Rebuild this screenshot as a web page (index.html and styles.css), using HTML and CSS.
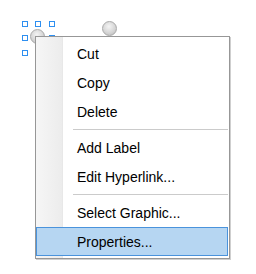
FILE: index.html
```html
<!DOCTYPE html>
<html>
<head>
<meta charset="utf-8">
<link rel="stylesheet" href="styles.css">
</head>
<body>
<div class="canvas">
  <span class="grip g1"></span>
  <span class="grip g2"></span>
  <span class="grip g3"></span>
  <span class="grip g4"></span>
  <span class="grip g5"></span>
  <span class="grip g6"></span>
  <span class="knob k1"></span>
  <span class="knob k2"></span>
  <div class="menu">
    <div class="item">Cut</div>
    <div class="item">Copy</div>
    <div class="item">Delete</div>
    <div class="sep"></div>
    <div class="item">Add Label</div>
    <div class="item">Edit Hyperlink...</div>
    <div class="sep"></div>
    <div class="item">Select Graphic...</div>
    <div class="item active">Properties...</div>
  </div>
</div>
</body>
</html>
```
FILE: styles.css
```css
html, body {
  margin: 0;
  padding: 0;
  background: #ffffff;
}
.canvas {
  position: relative;
  width: 256px;
  height: 274px;
  font-family: "Liberation Sans", Arial, sans-serif;
}
.grip {
  position: absolute;
  width: 6px;
  height: 6px;
  box-sizing: border-box;
  border: 1.5px solid #2e8ff0;
  background: #fff;
}
.g1 { left: 22px; top: 21px; }
.g2 { left: 35px; top: 21px; }
.g3 { left: 49px; top: 21px; }
.g4 { left: 22px; top: 35px; }
.g5 { left: 49px; top: 35px; }
.g6 { left: 22px; top: 50px; }
.knob {
  position: absolute;
  width: 15px;
  height: 15px;
  box-sizing: border-box;
  border-radius: 50%;
  border: 1px solid #a9a9a9;
  background: radial-gradient(circle at 45% 35%, #f4f4f4 0%, #d6d6d6 55%, #b8b8b8 100%);
}
.k1 { left: 30px; top: 29px; }
.k2 { left: 102px; top: 21px; }
.menu {
  position: absolute;
  left: 35px;
  top: 36px;
  width: 195px;
  height: 223px;
  box-sizing: border-box;
  border: 1px solid #979797;
  box-shadow: 1px 1px 0 #cfcfcf;
  padding: 2px 1px 2px 0;
  background: linear-gradient(to right, #f6f6f6 0, #ececec 26px, #e4e4e4 27px, #ffffff 27px, #ffffff 100%);
}
.item {
  height: 29px;
  line-height: 29px;
  padding-left: 41px;
  padding-top: 1px;
  box-sizing: border-box;
  font-size: 14px;
  color: #000;
  white-space: nowrap;
}
.item.active {
  background: #b6d6f2;
  box-shadow: inset 0 0 0 1px #4a93dc;
}
.sep {
  height: 7px;
  margin-left: 37px;
  position: relative;
}
.sep::after {
  content: "";
  position: absolute;
  left: 0;
  right: 0;
  top: 3px;
  height: 1px;
  background: #cbcbcb;
}
```
